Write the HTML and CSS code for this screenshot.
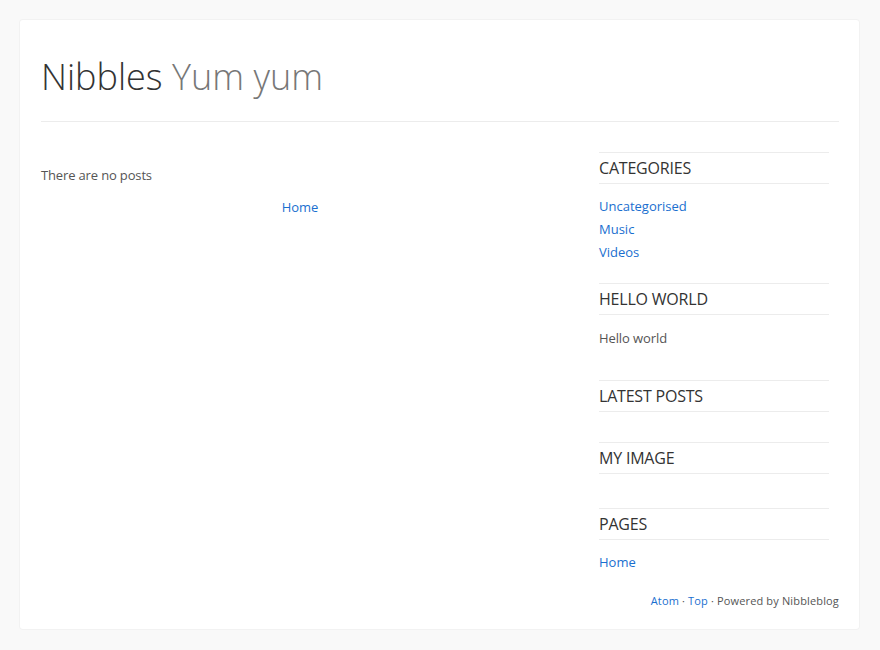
FILE: index.html
```html
<!DOCTYPE html>
<html>
<head>
<meta charset="utf-8">
<link rel="stylesheet" href="styles.css">
</head>
<body>
<div class="page">
  <header class="header">
    <h1 class="title">Nibbles <span class="slogan">Yum yum</span></h1>
  </header>
  <div class="content">
    <main class="main">
      <p class="empty">There are no posts</p>
      <div class="pager"><a href="#">Home</a></div>
    </main>
    <aside class="sidebar">
      <section class="widget w-cat">
        <h3 class="widget-title">CATEGORIES</h3>
        <ul class="links">
          <li><a href="#">Uncategorised</a></li>
          <li><a href="#">Music</a></li>
          <li><a href="#">Videos</a></li>
        </ul>
      </section>
      <section class="widget w-hello">
        <h3 class="widget-title">HELLO WORLD</h3>
        <p class="widget-text">Hello world</p>
      </section>
      <section class="widget w-latest">
        <h3 class="widget-title">LATEST POSTS</h3>
      </section>
      <section class="widget w-image">
        <h3 class="widget-title">MY IMAGE</h3>
      </section>
      <section class="widget w-pages">
        <h3 class="widget-title">PAGES</h3>
        <ul class="links">
          <li><a href="#">Home</a></li>
        </ul>
      </section>
    </aside>
  </div>
  <footer class="footer">
    <a href="#">Atom</a> · <a href="#">Top</a> · Powered by Nibbleblog
  </footer>
</div>
</body>
</html>
```

FILE: styles.css
```css
html, body {
  margin: 0;
  padding: 0;
}
body {
  background: #f9f9f9;
  font-family: "Open Sans", "Liberation Sans", sans-serif;
  font-size: 13px;
  color: #555;
  padding: 20px 21px 20px 20px;
}
a {
  color: #1a6fcf;
  text-decoration: none;
}
.page {
  background: #fff;
  border-radius: 3px;
  box-shadow: 0 0 0 1px #f2f2f2;
  padding: 0 20px 20px 21px;
  height: 589px;
  display: flex;
  flex-direction: column;
}
.header {
  border-bottom: 1px solid #ececec;
  height: 101px;
}
.title {
  margin: 0;
  padding-top: 32px;
  font-size: 36px;
  font-weight: 300;
  line-height: 50px;
  color: #333;
}
.slogan {
  color: #777;
}
.content {
  display: flex;
  padding-top: 30px;
  flex: 1;
}
.main {
  width: 518px;
}
.empty {
  margin: 12px 0 0;
  line-height: 23px;
  letter-spacing: -0.15px;
}
.pager {
  text-align: center;
  line-height: 23px;
  margin-top: 9px;
}
.sidebar {
  margin-left: 40px;
  width: 230px;
}
.widget-title {
  margin: 0;
  border-top: 1px solid #ececec;
  border-bottom: 1px solid #ececec;
  height: 30px;
  line-height: 30px;
  font-size: 16px;
  font-weight: 400;
  color: #333;
  letter-spacing: -0.2px;
}
.links {
  list-style: none;
  margin: 11px 0 0;
  padding: 0;
  line-height: 23px;
}
.widget-text {
  margin: 12px 0 0;
  line-height: 23px;
  letter-spacing: -0.1px;
}
.w-cat { margin-bottom: 19px; }
.w-hello { margin-bottom: 30px; }
.w-latest { margin-bottom: 30px; }
.w-image { margin-bottom: 34px; }
.footer {
  text-align: right;
  font-size: 11px;
  line-height: 16px;
  letter-spacing: 0.15px;
  color: #555;
}
```
